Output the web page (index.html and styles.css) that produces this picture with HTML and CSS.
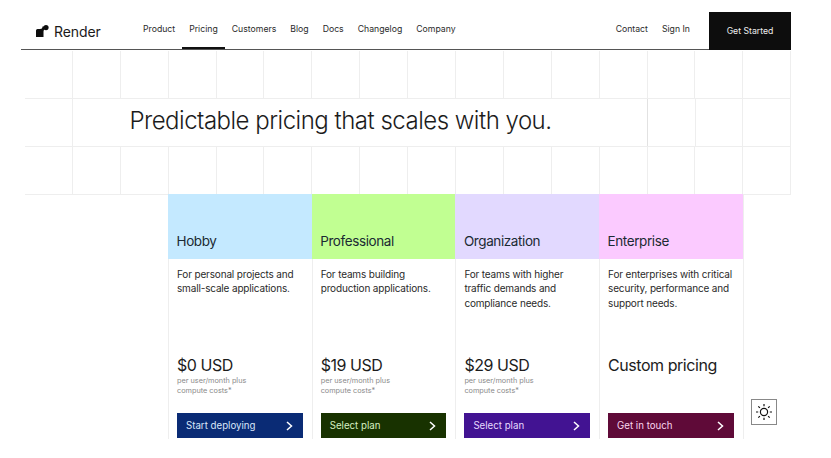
FILE: index.html
```html
<!DOCTYPE html>
<html lang="en">
<head>
<meta charset="utf-8">
<title>Render Pricing</title>
<link rel="stylesheet" href="styles.css">
</head>
<body>
<div class="page">
  <header class="top">
    <a class="logo">
      <svg class="logo-mark" viewBox="0 0 13 12" width="13" height="12" fill="#0d0d0d"><path d="M0 12V5.500Q0 4 1.500 4H4Q6.500 4 6.500 1.500H9V4Q7.500 4.500 7.500 6.500V12Z"/><circle cx="10" cy="2.600" r="2.600"/></svg>
      <span>Render</span>
    </a>
    <nav class="nav">
      <a class="nav-link">Product</a>
      <a class="nav-link active">Pricing</a>
      <a class="nav-link">Customers</a>
      <a class="nav-link">Blog</a>
      <a class="nav-link">Docs</a>
      <a class="nav-link">Changelog</a>
      <a class="nav-link">Company</a>
    </nav>
    <div class="nav-right">
      <a class="nav-link">Contact</a>
      <a class="nav-link">Sign In</a>
      <a class="cta">Get Started</a>
    </div>
  </header>

  <section class="hero">
    <div class="row">
      <i></i><i></i><i></i><i></i><i></i><i></i><i></i><i></i><i></i><i></i><i></i><i></i><i></i><i></i><i></i><i></i>
    </div>
    <div class="row">
      <i></i>
      <h1 class="title">Predictable pricing that scales with you.</h1>
      <i></i><i></i><i></i>
    </div>
    <div class="row">
      <i></i><i></i><i></i><i></i><i></i><i></i><i></i><i></i><i></i><i></i><i></i><i></i><i></i><i></i><i></i><i></i>
    </div>
  </section>

  <section class="plans">
    <article class="plan">
      <h2 class="plan-head hobby">Hobby</h2>
      <p class="desc">For personal projects and<br>small-scale applications.</p>
      <div class="price">$0 USD</div>
      <p class="note">per user/month plus<br>compute costs*</p>
      <a class="btn btn-hobby">Start deploying<svg class="chev" viewBox="0 0 7 10" width="7" height="10"><path d="M1 1 5.500 5 1 9" fill="none" stroke="#fff" stroke-width="1.500"/></svg></a>
    </article>
    <article class="plan">
      <h2 class="plan-head pro">Professional</h2>
      <p class="desc">For teams building<br>production applications.</p>
      <div class="price">$19 USD</div>
      <p class="note">per user/month plus<br>compute costs*</p>
      <a class="btn btn-pro">Select plan<svg class="chev" viewBox="0 0 7 10" width="7" height="10"><path d="M1 1 5.500 5 1 9" fill="none" stroke="#fff" stroke-width="1.500"/></svg></a>
    </article>
    <article class="plan">
      <h2 class="plan-head org">Organization</h2>
      <p class="desc">For teams with higher<br>traffic demands and<br>compliance needs.</p>
      <div class="price">$29 USD</div>
      <p class="note">per user/month plus<br>compute costs*</p>
      <a class="btn btn-org">Select plan<svg class="chev" viewBox="0 0 7 10" width="7" height="10"><path d="M1 1 5.500 5 1 9" fill="none" stroke="#fff" stroke-width="1.500"/></svg></a>
    </article>
    <article class="plan">
      <h2 class="plan-head ent">Enterprise</h2>
      <p class="desc">For enterprises with critical<br>security, performance and<br>support needs.</p>
      <div class="price">Custom pricing</div>
      <p class="note"></p>
      <a class="btn btn-ent">Get in touch<svg class="chev" viewBox="0 0 7 10" width="7" height="10"><path d="M1 1 5.500 5 1 9" fill="none" stroke="#fff" stroke-width="1.500"/></svg></a>
    </article>
  </section>
</div>
<button class="theme" aria-label="Toggle theme">
  <svg viewBox="0 0 18 18" width="18" height="18" fill="none" stroke="#111" stroke-width="1.200"><circle cx="9" cy="9" r="3.600"/><path d="M9 1v2.200M9 14.800V17M1 9h2.200M14.800 9H17M3.300 3.300l1.600 1.600M13.100 13.100l1.600 1.600M3.300 14.700l1.600-1.600M13.100 4.900l1.600-1.600"/></svg>
</button>
</body>
</html>
```
FILE: styles.css
```css
* { box-sizing: border-box; }
html, body { margin: 0; padding: 0; background: #fff; }
body {
  width: 831px;
  height: 458px;
  overflow: hidden;
  font-family: Inter, "Liberation Sans", sans-serif;
  color: #1a1a1a;
}
.page { padding: 12px 40px 0 21px; }
.top {
  display: flex;
  align-items: stretch;
  height: 38px;
  width: 770px;
  border-bottom: 1px solid #555;
}
.logo {
  display: flex;
  align-items: center;
  gap: 5px;
  width: 115px;
  padding: 0 0 0 15px;
  font-size: 14px;
  letter-spacing: -0.1px;
  color: #1a1a1a;
  height: 38px;
}
.logo-mark { flex: none; margin-top: -1px; }
.nav { display: flex; align-items: stretch; }
.nav-link {
  display: flex;
  align-items: center;
  padding: 0 7px 1px;
  margin-bottom: -1px;
  height: 37px;
  font-size: 8.700px;
  color: #2a2a2a;
  border-bottom: 2px solid transparent;
  white-space: nowrap;
}
.nav-link.active { border-bottom-color: #111; }
.nav-right { display: flex; margin-left: auto; align-items: stretch; }
.cta {
  display: flex;
  align-items: center;
  justify-content: center;
  width: 82px;
  margin-left: 12px;
  background: #0d0d0d;
  color: #eee;
  font-size: 8.700px;
  padding-bottom: 1px;
  height: 38px;
}
.hero { margin: 1px 0 0 4px; width: 766.400px; }
.row { display: flex; height: 48px; border-bottom: 1px solid #eeeeee; }
.row i {
  flex: 0 0 47.900px;
  border-right: 1px solid #eeeeee;
}
.title {
  flex: 0 0 574.800px;
  margin: 0;
  padding: 0 0 5px 56.500px;
  display: flex;
  align-items: center;
  border-right: 1px solid #e2e2e2;
  font-size: 24px;
  font-weight: 300;
  letter-spacing: -0.5px;
  color: #1c1c1c;
  white-space: nowrap;
}
.plans {
  display: grid;
  grid-template-columns: repeat(4, 143.700px);
  margin: -1px 0 0 147px;
  width: 575.800px;
  border-right: 1px solid #eeeeee;
}
.plan {
  display: flex;
  flex-direction: column;
  height: 245px;
  border-left: 1px solid #eeeeee;
}
.plan-head {
  margin: 0 0 0 -1px;
  height: 65px;
  padding: 30px 0 0 8.500px;
  font-size: 13.500px;
  line-height: 34px;
  font-weight: 400;
  letter-spacing: -0.4px;
  color: #1b2a33;
}
.hobby { background: #c4e9ff; }
.pro { background: #c1ff92; }
.org { background: #e2d9ff; }
.ent { background: #fbcaff; }
.desc {
  margin: 8px 0 0 8px;
  height: 86px;
  font-size: 10px;
  line-height: 14.400px;
  letter-spacing: -0.16px;
  color: #2a2a2a;
  white-space: nowrap;
}
.price {
  margin: 0 0 0 8px;
  font-size: 16px;
  line-height: 24px;
  letter-spacing: -0.45px;
  height: 24px;
  color: #1c1c1c;
  white-space: nowrap;
}
.note {
  margin: -1px 0 0 8px;
  height: 37px;
  font-size: 7.300px;
  line-height: 10px;
  color: #8a8a8a;
}
.btn {
  display: flex;
  align-items: center;
  justify-content: space-between;
  margin: 0 9px 0 8px;
  height: 25px;
  padding: 0 10px 0 9px;
  font-size: 9.700px;
}
.chev { flex: none; }
.btn-hobby { background: #0a2b75; color: #d9e6fa; }
.btn-pro { background: #183200; color: #d6f0c2; }
.btn-org { background: #421392; color: #e6daff; }
.btn-ent { background: #5f0a38; color: #f9d6ee; }
.theme {
  position: fixed;
  left: 751px;
  top: 399px;
  width: 26px;
  height: 26px;
  padding: 0;
  display: flex;
  align-items: center;
  justify-content: center;
  background: #fff;
  border: 1px solid #888;
}
```
